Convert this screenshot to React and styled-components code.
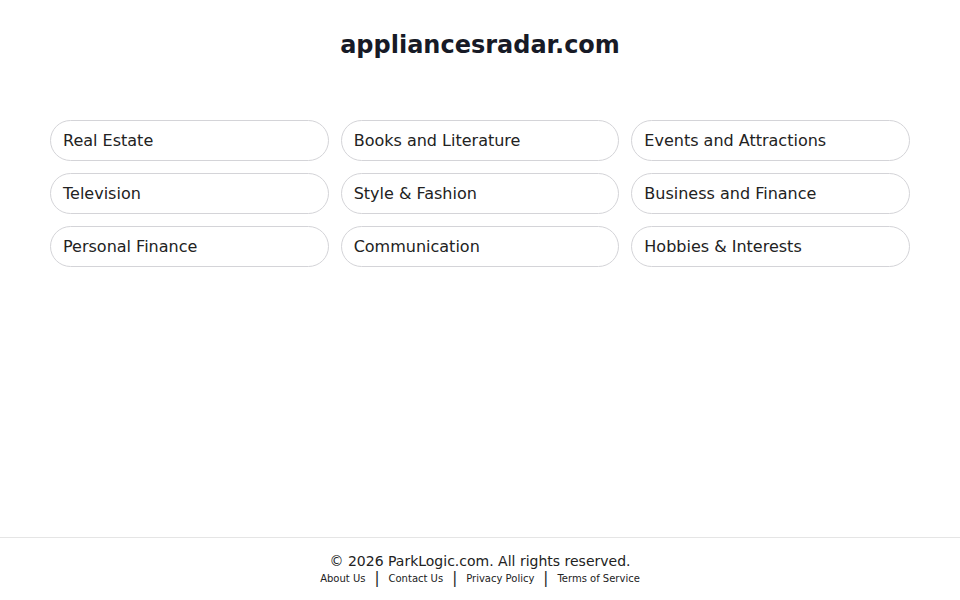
import React from "react";
import styled, { createGlobalStyle } from "styled-components";

const categories = [
  "Real Estate",
  "Books and Literature",
  "Events and Attractions",
  "Television",
  "Style & Fashion",
  "Business and Finance",
  "Personal Finance",
  "Communication",
  "Hobbies & Interests",
];

const links = ["About Us", "Contact Us", "Privacy Policy", "Terms of Service"];

const GlobalStyle = createGlobalStyle`
  html, body {
    margin: 0;
    padding: 0;
    background: #ffffff;
    font-family: "DejaVu Sans", "Liberation Sans", sans-serif;
  }
  * {
    box-sizing: border-box;
  }
`;

const Page = styled.div`
  min-height: 100vh;
  display: flex;
  flex-direction: column;
`;

const Main = styled.main`
  flex: 1;
  padding: 28px 50px 0;
`;

const Title = styled.h1`
  margin: 0;
  text-align: center;
  font-size: 24px;
  line-height: 34px;
  font-weight: 700;
  color: #171a26;
`;

const Grid = styled.div`
  margin-top: 58px;
  display: grid;
  grid-template-columns: repeat(3, 1fr);
  gap: 12px;
`;

const Pill = styled.a`
  display: flex;
  align-items: center;
  height: 41px;
  padding: 0 12px;
  border: 1px solid #d4d4d8;
  border-radius: 21px;
  font-size: 16px;
  color: #222222;
  text-decoration: none;
  cursor: pointer;
`;

const Footer = styled.footer`
  border-top: 1px solid #e5e5e5;
  padding: 13px 0 15px;
  text-align: center;
`;

const Copy = styled.p`
  margin: 0;
  font-size: 14px;
  line-height: 20px;
  color: #222222;
`;

const Links = styled.nav`
  display: flex;
  justify-content: center;
  align-items: center;
  height: 14px;
`;

const FootLink = styled.a`
  font-size: 10px;
  color: #222222;
  text-decoration: none;
`;

const Sep = styled.span`
  font-size: 15px;
  line-height: 14px;
  margin: 0 9px;
  color: #222222;
`;

export default function App() {
  return (
    <Page>
      <GlobalStyle />
      <Main>
        <Title>appliancesradar.com</Title>
        <Grid>
          {categories.map((c) => (
            <Pill key={c}>{c}</Pill>
          ))}
        </Grid>
      </Main>
      <Footer>
        <Copy>© 2026 ParkLogic.com. All rights reserved.</Copy>
        <Links>
          {links.map((l, i) => (
            <React.Fragment key={l}>
              {i > 0 && <Sep>|</Sep>}
              <FootLink>{l}</FootLink>
            </React.Fragment>
          ))}
        </Links>
      </Footer>
    </Page>
  );
}
